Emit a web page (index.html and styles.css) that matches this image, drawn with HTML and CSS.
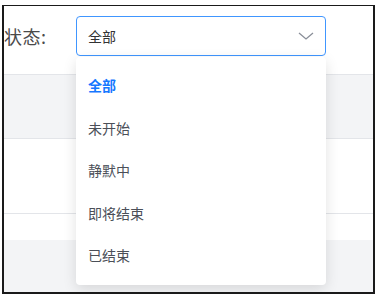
FILE: index.html
```html
<!DOCTYPE html>
<html lang="zh">
<head>
<meta charset="utf-8">
<link rel="stylesheet" href="styles.css">
</head>
<body>
<div class="frame">
  <div class="filter">
    <span class="label">状态:</span>
    <div class="select">
      <span class="value">全部</span>
      <svg class="chevron" width="16" height="8" viewBox="0 0 16 8"><path d="M1 1 L8 7 L15 1" fill="none" stroke="#8a8f99" stroke-width="1.3"/></svg>
      <ul class="dropdown">
        <li class="item active">全部</li>
        <li class="item">未开始</li>
        <li class="item">静默中</li>
        <li class="item">即将结束</li>
        <li class="item">已结束</li>
      </ul>
    </div>
  </div>
  <div class="table">
    <div class="row gray r1"></div>
    <div class="row r2"></div>
    <div class="row r3"></div>
    <div class="row gray r4"></div>
  </div>
</div>
</body>
</html>
```
FILE: styles.css
```css
html, body {
  margin: 0;
  padding: 0;
  background: #fff;
}
body {
  font-family: "Noto Sans CJK SC", "Noto Sans", sans-serif;
}
.frame {
  margin: 5px 0 0 2px;
  width: 373px;
  height: 289px;
  box-sizing: border-box;
  border: 2px solid #1a1a1a;
  border-top-width: 1px;
  overflow: hidden;
  display: flex;
  flex-direction: column;
}
.filter {
  height: 69px;
  box-sizing: border-box;
  padding-top: 10px;
  display: flex;
  align-items: flex-start;
  border-bottom: 1px solid #e3e5e9;
}
.label {
  font-size: 18px;
  color: #4a4a4a;
  line-height: 40px;
  width: 72px;
  letter-spacing: 0.5px;
  white-space: nowrap;
}
.select {
  position: relative;
  width: 250px;
  height: 40px;
  box-sizing: border-box;
  border: 1px solid #4096ff;
  border-radius: 4px;
  display: flex;
  align-items: center;
  justify-content: space-between;
  padding: 0 11px 0 11px;
}
.value {
  font-size: 14px;
  color: #333;
}
.chevron {
  display: block;
}
.dropdown {
  position: absolute;
  left: -1px;
  top: 40px;
  width: 250px;
  margin: 0;
  padding: 7px 0 8px;
  list-style: none;
  background: #fff;
  border-radius: 4px;
  box-shadow: 0 4px 14px rgba(0, 0, 0, 0.12);
  z-index: 5;
}
.item {
  height: 42.5px;
  line-height: 42.5px;
  padding-left: 12px;
  font-size: 14px;
  color: #4b4f58;
}
.item.active {
  color: #1677ff;
  font-weight: 700;
}
.table {
  flex: 1;
  display: flex;
  flex-direction: column;
}
.row {
  border-bottom: 1px solid #e3e5e9;
}
.gray {
  background: #f3f4f6;
}
.r1 { height: 63px; }
.r2 { height: 74px; }
.r3 { height: 26px; border-bottom: none; }
.r4 { flex: 1; border-bottom: none; }
```
